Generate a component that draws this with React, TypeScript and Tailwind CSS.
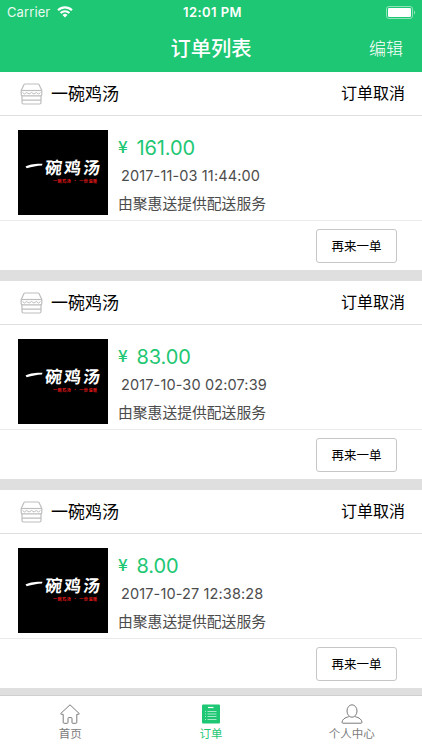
import React from "react";

interface Order {
  id: number;
  shop: string;
  status: string;
  price: string;
  time: string;
}

const orders: Order[] = [
  { id: 1, shop: "一碗鸡汤", status: "订单取消", price: "161.00", time: "2017-11-03 11:44:00" },
  { id: 2, shop: "一碗鸡汤", status: "订单取消", price: "83.00", time: "2017-10-30 02:07:39" },
  { id: 3, shop: "一碗鸡汤", status: "订单取消", price: "8.00", time: "2017-10-27 12:38:28" },
];

const tabs = [
  { label: "首页", icon: HomeIcon, active: false },
  { label: "订单", icon: OrderIcon, active: true },
  { label: "个人中心", icon: UserIcon, active: false },
];

export default function App() {
  return (
    <div className="flex h-[750px] w-[422px] flex-col overflow-hidden bg-[#dfdfdf] font-['Inter','Noto_Sans_CJK_SC',sans-serif]">
      <header className="h-[72px] shrink-0 bg-[#1dc773] text-white">
        <StatusBar />
        <div className="grid h-12 grid-cols-3 items-center">
          <h1 className="col-start-2 pt-0.5 text-center text-[20.3px] leading-none font-medium whitespace-nowrap">
            订单列表
          </h1>
          <button className="justify-self-end pt-0.5 pr-[19px] text-[17px] leading-none font-light">
            编辑
          </button>
        </div>
      </header>

      <main className="flex min-h-0 flex-1 flex-col gap-[11px] overflow-hidden">
        {orders.map((order) => (
          <OrderCard key={order.id} order={order} />
        ))}
      </main>

      <nav className="grid h-[55px] shrink-0 grid-cols-3 border-t border-[#cfcfcf] bg-white">
        {tabs.map(({ label, icon: Icon, active }) => (
          <button
            key={label}
            className={`flex flex-col items-center pt-2 ${active ? "text-[#1dc773]" : "text-[#7b7b7b]"}`}
          >
            <Icon />
            <span className="mt-[3px] text-[11.5px] leading-[14px]">{label}</span>
          </button>
        ))}
      </nav>
    </div>
  );
}

function StatusBar() {
  return (
    <div className="grid h-6 grid-cols-3 items-center text-[13px] leading-none">
      <div className="flex items-center gap-[7px] pl-[7px]">
        <span className="tracking-[0.1px] opacity-90">Carrier</span>
        <svg width="16" height="12" viewBox="0 0 16 12" fill="none" stroke="currentColor">
          <path d="M1 4.2a10 10 0 0 1 14 0" strokeWidth="2.1" />
          <path d="M3.6 7a6.2 6.2 0 0 1 8.8 0" strokeWidth="2" />
          <path d="M8 11.5 5.5 9a3.5 3.5 0 0 1 5 0z" fill="currentColor" stroke="none" />
        </svg>
      </div>
      <span className="pl-[3px] text-center font-semibold tracking-[0.45px]">12:01 PM</span>
      <svg className="mr-[6px] justify-self-end" width="30" height="13" viewBox="0 0 30 13" fill="none">
        <rect x="0.5" y="0.5" width="26" height="12" rx="2.5" stroke="#8fe3b9" />
        <rect x="2" y="2" width="23" height="9" rx="1.3" fill="#fff" />
        <path d="M28 4.5v4c1.6-.6 1.6-3.4 0-4z" fill="#8fe3b9" />
      </svg>
    </div>
  );
}

function OrderCard({ order }: { order: Order }) {
  return (
    <section className="flex h-[198px] shrink-0 flex-col bg-white">
      <div className="flex h-11 items-center border-b border-[#dedede] pr-[17px] pl-5 text-black">
        <ShopIcon />
        <span className="ml-2 pt-px text-[17px] leading-none">{order.shop}</span>
        <span className="ml-auto -mt-px text-[16px] leading-none">{order.status}</span>
      </div>
      <div className="flex h-[105px] border-b border-[#ebebeb] pt-[14px] pl-[18px]">
        <ShopLogo />
        <div className="ml-[10px] flex flex-col pt-px text-[#4c4c4c]">
          <div className="flex h-8 items-center text-[#1dc773]">
            <span className="w-[18.5px] pb-[3px] font-['Noto_Sans_CJK_SC',sans-serif] text-[17px] leading-none font-medium">
              ¥
            </span>
            <span className="pt-px text-[20px] leading-none tracking-[-0.1px]">{order.price}</span>
          </div>
          <span className="pl-[3px] text-[14.5px] leading-[26px] tracking-[0.13px]">{order.time}</span>
          <span className="pt-px text-[14.8px] leading-[28px]">由聚惠送提供配送服务</span>
        </div>
      </div>
      <div className="flex flex-1 items-center justify-end pt-px pr-[25px]">
        <button className="h-[34px] w-[81px] rounded-[3px] border border-[#c6c6c6] pt-[3px] text-[12.5px] leading-none text-black">
          再来一单
        </button>
      </div>
    </section>
  );
}

// White hand lettering on black with a small red slogan below it
function ShopLogo() {
  return (
    <svg className="shrink-0" width="90" height="85" viewBox="0 0 90 85">
      <rect width="90" height="85" fill="#000" />
      <path d="M7.500 36.500c3-1.900 9-3.100 17-2.800l-.5 1.700c-5 .1-10 1.500-15.300 2.900z" fill="#fff" />
      <g fill="#fff" fontFamily="Noto Sans CJK SC, sans-serif" fontWeight="700">
        <text fontSize="17" transform="translate(26.500 44) skewX(-6)">碗</text>
        <text fontSize="17" transform="translate(45.500 43.500) skewX(-6)">鸡</text>
        <text fontSize="17" transform="translate(64.500 43.500) skewX(-6)">汤</text>
      </g>
      <text
        x="35"
        y="53"
        fill="#e01818"
        fontFamily="Noto Sans CJK SC, sans-serif"
        fontWeight="700"
        fontSize="4"
        textLength="44"
      >
        一碗鸡汤 · 一份温暖
      </text>
    </svg>
  );
}

function ShopIcon() {
  return (
    <svg width="23" height="22" viewBox="0 0 23 22" fill="none" stroke="#bdbdbd" strokeWidth="1.2" strokeLinejoin="round">
      <path d="M5 1h13q.7 0 1 .6L21.800 7.500v4q0 1.300-1.300 1.300h-18q-1.300 0-1.300-1.300v-4L4 1.600Q4.300 1 5 1z" />
      <path d="M1.200 7.500h20.600" />
      <path d="M2.500 9.500l2 1.500 2.200-1.500L9 11l2.500-1.500L14 11l2.300-1.500 2.200 1.500 2-1.500" strokeWidth="1" />
      <path d="M2 12.800v6.700q0 1.500 1.500 1.500h16q1.500 0 1.500-1.500v-6.700M2 17.200h19" />
    </svg>
  );
}

function HomeIcon() {
  return (
    <svg width="20" height="20" viewBox="0 0 20 20" fill="none" stroke="currentColor" strokeWidth="1" strokeLinejoin="round">
      <path d="M10 .8.900 9.400q-.5.900.4.900h1.900v8q0 1 .9 1h3.200q.7 0 .7-.8v-4q0-.9.900-.9h2.200q.9 0 .9.900v4q0 .8.700.8h3.200q.9 0 .9-1v-8h1.900q.9 0 .4-.9z" />
    </svg>
  );
}

function OrderIcon() {
  return (
    <svg width="20" height="20" viewBox="0 0 20 20" fill="none">
      <rect x="1" y="0.500" width="18" height="19" rx="1" fill="currentColor" />
      <path d="M7 3.500h5.500" stroke="#fff" strokeWidth="1.200" />
      <path d="M4 7.500h1M6.500 7.500h9M4 10h1M6.500 10h9M4 12.500h1M6.500 12.500h9M4 15.500h1M6.500 15.500h9" stroke="#b5edd0" strokeWidth="0.9" />
    </svg>
  );
}

function UserIcon() {
  return (
    <svg width="22" height="20" viewBox="0 0 22 20" fill="none" stroke="currentColor" strokeWidth="1" strokeLinejoin="round">
      <ellipse cx="11" cy="7" rx="5" ry="6.200" />
      <path d="M7.800 12.700Q1.600 14 1 18.200q0 1 1 1h18q1 0 1-1-.6-4.200-6.800-5.500" />
    </svg>
  );
}
